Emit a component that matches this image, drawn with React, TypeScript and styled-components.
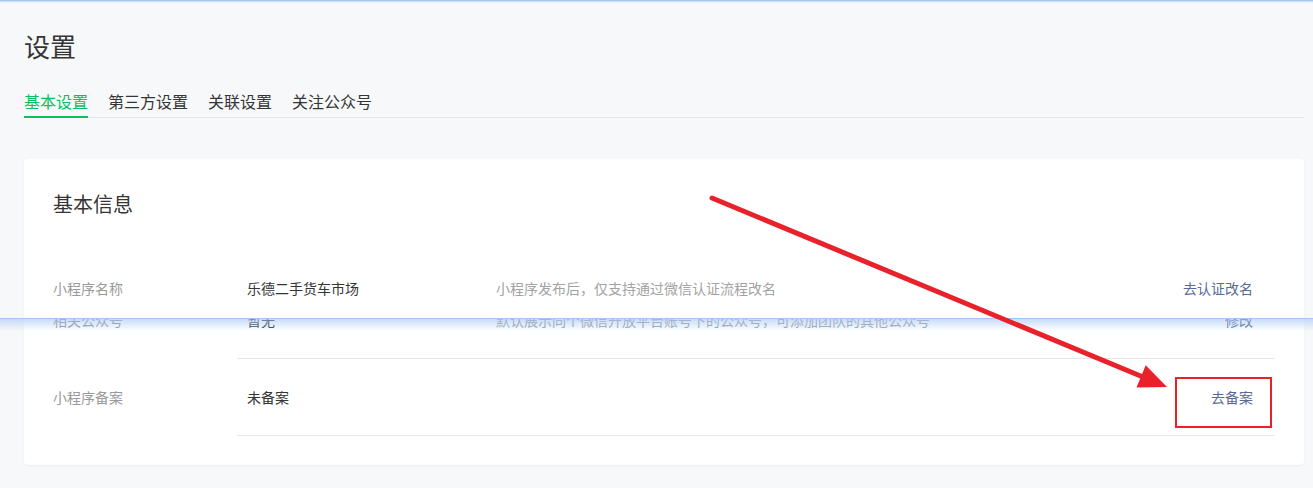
import React from 'react'
import styled, { createGlobalStyle } from 'styled-components'

const GlobalStyle = createGlobalStyle`
    html, body {
        margin: 0;
        padding: 0;
        background: #f7f8fa;
    }
    body {
        font-family: "Noto Sans CJK SC", "Noto Sans", sans-serif;
        color: #353535;
    }
`

const Page = styled.div`
    position: relative;
    width: 1313px;
    height: 488px;
    overflow: hidden;
    background: #f7f8fa;
`

// blue seam left by the stitched capture
const CaptureEdge = styled.div<{ $fade: number }>`
    position: relative;
    height: 1px;
    background: #a3c6f5;
    &::after {
        content: '';
        position: absolute;
        left: 0;
        right: 0;
        top: 1px;
        height: ${props => props.$fade}px;
        background: linear-gradient(rgba(163, 198, 245, 0.6), rgba(163, 198, 245, 0));
        z-index: 2;
        pointer-events: none;
    }
`

const Section = styled.div`
    padding: 0 9px 0 24px;
`

const Header = styled.div`
    padding-top: 27px;
`

const PageTitle = styled.h1`
    margin: 0;
    font-size: 26px;
    line-height: 36px;
    font-weight: 400;
    color: #353535;
`

const Tabs = styled.div`
    display: flex;
    gap: 20px;
    margin-top: 26px;
    border-bottom: 1px solid #e5e5e5;
`

const Tab = styled.div<{ $active?: boolean }>`
    font-size: 16px;
    line-height: 22px;
    padding-bottom: 4px;
    margin-bottom: -1px;
    border-bottom: 2px solid ${props => (props.$active ? '#07c160' : 'transparent')};
    color: ${props => (props.$active ? '#07c160' : '#353535')};
    cursor: pointer;
`

const Card = styled.div<{ $part: 'top' | 'bottom' }>`
    background: #fff;
    padding: ${props => (props.$part === 'top' ? '31px 30px 0 29px' : '0 30px 29px 29px')};
    margin-top: ${props => (props.$part === 'top' ? '41px' : '0')};
    border-radius: ${props => (props.$part === 'top' ? '4px 4px 0 0' : '0 0 4px 4px')};
    box-shadow: 0 1px 2px rgba(0, 0, 0, 0.05);
`

const CardTitle = styled.h2`
    margin: 0 0 32px;
    font-size: 20px;
    line-height: 28px;
    font-weight: 400;
    color: #353535;
`

const RowClip = styled.div<{ $height: number; $offset?: number }>`
    height: ${props => props.$height}px;
    overflow: hidden;
    > div {
        margin-top: ${props => -(props.$offset || 0)}px;
    }
`

const Row = styled.div`
    display: flex;
    font-size: 14px;
    line-height: 22px;
`

const Label = styled.div`
    flex: none;
    width: 184px;
    padding-top: 27px;
    color: #9a9a9a;
`

const Body = styled.div`
    flex: 1;
    display: flex;
    padding: 27px 21px 27px 10px;
    border-bottom: 1px solid #e7e7e7;
`

const Value = styled.div`
    flex: none;
    width: 249px;
    color: #353535;
`

const Desc = styled.div`
    flex: 1;
    color: #a3a3a3;
`

const Action = styled.a`
    flex: none;
    color: #576b95;
    text-decoration: none;
    cursor: pointer;
`

const Annotation = styled.svg`
    position: absolute;
    left: 0;
    top: 0;
    z-index: 3;
    pointer-events: none;
`

type Item = { label: string; value: string; desc?: string; action: string }

const InfoRow: React.FC<{ item: Item }> = ({ item }) => (
    <Row>
        <Label>{item.label}</Label>
        <Body>
            <Value>{item.value}</Value>
            <Desc>{item.desc}</Desc>
            <Action href="#!">{item.action}</Action>
        </Body>
    </Row>
)

const nameRow: Item = {
    label: '小程序名称',
    value: '乐德二手货车市场',
    desc: '小程序发布后，仅支持通过微信认证流程改名',
    action: '去认证改名',
}
const mpRow: Item = {
    label: '相关公众号',
    value: '暂无',
    desc: '默认展示同个微信开放平台账号下的公众号，可添加团队的其他公众号',
    action: '修改',
}
const recordRow: Item = { label: '小程序备案', value: '未备案', action: '去备案' }

const tabs = ['基本设置', '第三方设置', '关联设置', '关注公众号']

const App: React.FC = () => {
    const [active, setActive] = React.useState(0)
    return (
        <Page>
            <GlobalStyle />
            <CaptureEdge $fade={2} />
            <Section>
                <Header>
                    <PageTitle>设置</PageTitle>
                    <Tabs>
                        {tabs.map((t, i) => (
                            <Tab key={t} $active={i === active} onClick={() => setActive(i)}>
                                {t}
                            </Tab>
                        ))}
                    </Tabs>
                </Header>
                <Card $part="top">
                    <CardTitle>基本信息</CardTitle>
                    <RowClip $height={68}>
                        <InfoRow item={nameRow} />
                    </RowClip>
                </Card>
            </Section>
            <CaptureEdge $fade={12} />
            <Section>
                <Card $part="bottom">
                    <RowClip $height={40} $offset={37}>
                        <InfoRow item={mpRow} />
                    </RowClip>
                    <InfoRow item={recordRow} />
                </Card>
            </Section>
            <Annotation width="1313" height="488" viewBox="0 0 1313 488">
                <line x1="712" y1="198" x2="1143" y2="377" stroke="#e8212a" strokeWidth="5" strokeLinecap="round" />
                <polygon points="1167,387 1136.5,387.4 1145.7,365.2" fill="#e8212a" />
                <rect x="1176" y="378" width="95" height="49" fill="none" stroke="#e8212a" strokeWidth="2" />
            </Annotation>
        </Page>
    )
}

export default App
